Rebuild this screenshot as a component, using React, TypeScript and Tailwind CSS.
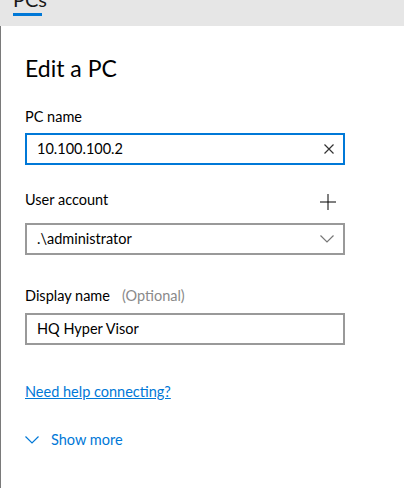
import { useState } from 'react';

const font = { fontFamily: 'Lato, "Noto Sans", sans-serif' };

function ClearIcon() {
  return (
    <svg width="10" height="10" viewBox="0 0 10 10" className="text-[#333]">
      <path d="M0.5 0.5 L9.5 9.5 M9.5 0.5 L0.5 9.5" stroke="currentColor" strokeWidth="1.2" fill="none" />
    </svg>
  );
}

function Chevron({ className }: { className?: string }) {
  return (
    <svg width="14" height="8" viewBox="0 0 14 8" className={className}>
      <path d="M0.5 0.5 L7 7 L13.5 0.5" stroke="currentColor" strokeWidth="1.2" fill="none" />
    </svg>
  );
}

export default function App() {
  const [pcName, setPcName] = useState('10.100.100.2');
  const [displayName, setDisplayName] = useState('HQ Hyper Visor');

  return (
    <div className="flex h-[488px] w-[404px] flex-col overflow-hidden bg-white text-black" style={font}>
      {/* Tab strip, cut at the top */}
      <div className="relative h-[26px] shrink-0 bg-[#e6e6e6]">
        <div className="absolute left-[13px] top-[-14px] flex flex-col">
          <span className="text-[20px] leading-[26px] text-[#1a1a1a]">PCs</span>
          <span className="mt-[1px] h-[3px] w-[29px] bg-[#0078d7]" />
        </div>
      </div>

      {/* Edit pane */}
      <div className="flex flex-1 flex-col border-l border-[#7a7a7a] pl-[24px]">
        <h1 className="mt-[26px] text-[23px] leading-[32px] font-normal">Edit a PC</h1>

        <label className="mt-[23px] text-[14.5px] leading-[20px]">PC name</label>
        <div className="mt-[6px] flex h-[32px] w-[320px] items-center border-2 border-[#0078d7] pl-[10px] pr-[9px]">
          <input
            value={pcName}
            onChange={(e) => setPcName(e.target.value)}
            className="min-w-0 flex-1 bg-transparent text-[14.5px] outline-none"
          />
          <ClearIcon />
        </div>

        <div className="mt-[25px] flex w-[320px] items-center justify-between">
          <span className="text-[14.5px] leading-[20px]">User account</span>
          <svg width="16" height="16" viewBox="0 0 16 16" className="mr-[9px] mt-[4px]">
            <path d="M8 0 V16 M0 8 H16" stroke="#000" strokeWidth="1" fill="none" />
          </svg>
        </div>
        <div className="mt-[13px] flex h-[32px] w-[320px] items-center border-2 border-[#999] pl-[10px] pr-[9px]">
          <span className="flex-1 text-[14.5px]">.\administrator</span>
          <Chevron className="text-[#777]" />
        </div>

        <div className="mt-[31px] flex items-center gap-[12px] text-[14.5px] leading-[20px]">
          <span>Display name</span>
          <span className="text-[#8a8a8a]">(Optional)</span>
        </div>
        <div className="mt-[7px] flex h-[32px] w-[320px] items-center border-2 border-[#999] pl-[10px] pr-[9px]">
          <input
            value={displayName}
            onChange={(e) => setDisplayName(e.target.value)}
            className="min-w-0 flex-1 bg-transparent text-[14.5px] outline-none"
          />
        </div>

        <a href="#" className="mt-[37px] self-start text-[14.5px] leading-[20px] text-[#0078d7] underline">
          Need help connecting?
        </a>

        <button className="mt-[28px] flex items-center gap-[12px] self-start text-[14.5px] leading-[20px] text-[#0078d7]">
          <Chevron />
          Show more
        </button>
      </div>
    </div>
  );
}
